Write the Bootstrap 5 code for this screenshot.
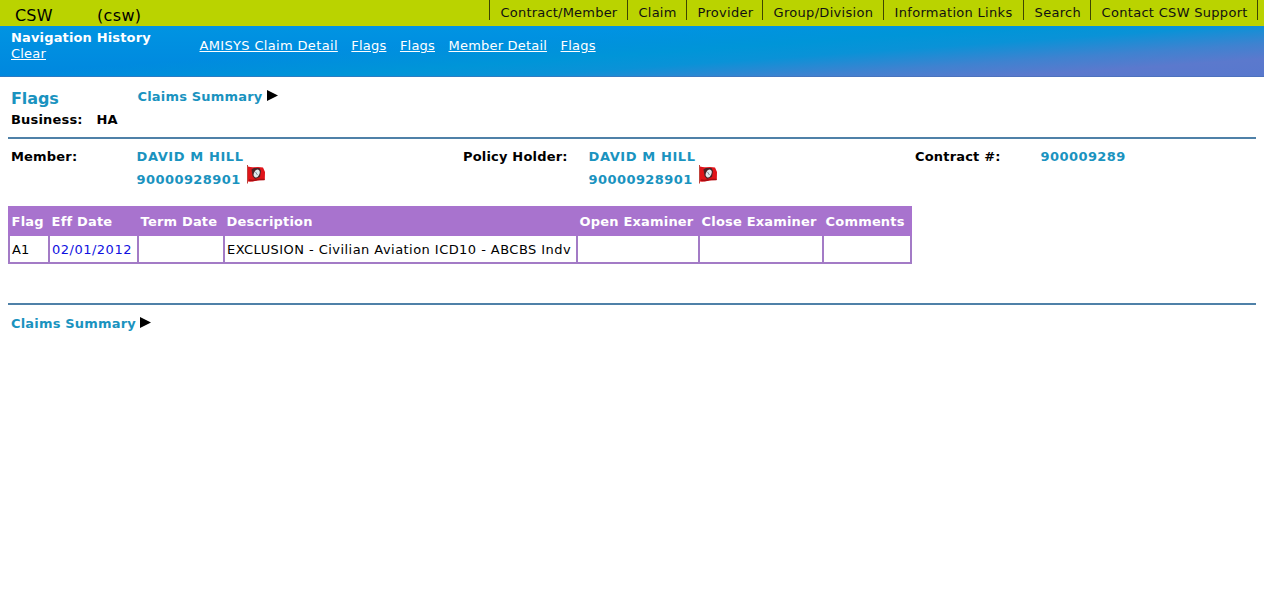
<!DOCTYPE html>
<html lang="en">
<head>
<meta charset="utf-8">
<meta name="viewport" content="width=device-width, initial-scale=1">
<title>CSW - Flags</title>
<link href="https://cdn.jsdelivr.net/npm/bootstrap@5.3.0/dist/css/bootstrap.min.css" rel="stylesheet">
<script src="https://cdn.jsdelivr.net/npm/bootstrap@5.3.0/dist/js/bootstrap.bundle.min.js"></script>
<style>
body{font-family:"DejaVu Sans",sans-serif;font-size:13px;line-height:16px;letter-spacing:.18px;color:#000;background:#fff}
a{text-decoration:none}
.topbar{height:26px;background:#bad300;border-bottom:1px solid #c4cf00}
.brand-text{font-size:16px;line-height:20px;padding:6px 0 0 15px}
.brand-text .app-name{width:82px;letter-spacing:.15px}
.brand-text .app-user{letter-spacing:.35px}
.top-menu{height:20px;border-left:1px solid #3d4500;margin-right:6px}
.top-menu a{height:20px;color:#111;border-right:1px solid #3d4500;padding:5px 0 0 10.6px;white-space:nowrap;letter-spacing:.3px}
.m1{width:138px}.m2{width:59px}.m3{width:76px}.m4{width:121px}.m5{width:140px}.m6{width:67px}.m7{width:167px}
.top-menu .m1,.top-menu .m2{letter-spacing:.2px}
.history{height:51px;background:linear-gradient(176deg,rgba(0,149,216,0) 34%,#0095d8 52%,#0a92d7 62%,#3f82d0 76%,#5b79cd 87%,#5878cd 100%),linear-gradient(#0094e2,#0087de);color:#fff;box-shadow:inset 0 -1px rgba(70,110,180,.6)}
.history a{color:#fff;text-decoration:underline;white-space:nowrap;letter-spacing:.2px}
.hist-title{width:199.5px;padding:4px 0 0 11px;letter-spacing:.15px}
.hist-links{padding-top:12px;gap:13.5px}
.hist-links a:first-child{letter-spacing:.34px}
.teal{color:#1a93bf;font-weight:700}
.page-head{padding:12px 0 0 11px;height:60px}
.page-title{font-size:16px;line-height:20px;width:126.5px;margin:0;letter-spacing:-.1px}
.business-line{padding-top:3px}
.business-label{width:85.5px}
.rule{height:2px;background:#4f81a8;margin:0 8px}
.rule-bottom{margin-top:39px}
.people{height:67px;padding:10px 0 0 11px}
.who{width:452px}
.who-label{width:125.5px;font-weight:700}
.digits{letter-spacing:.43px}
.who-name{letter-spacing:.6px}
.id-line{height:23px;padding-top:7px}
.warn-flag{width:20px;height:20px;margin:-8px 0 0 5px}
.tri{width:11px;height:12px;margin:1px 0 0 4.5px}
.flags-table{width:904px;margin-left:8px;table-layout:fixed;border-collapse:collapse}
.flags-table th,.flags-table td{border:2px solid #a37bc6;height:28px;white-space:nowrap;vertical-align:middle}
.flags-table th{background:#a873ce;border-color:#a873ce;color:#fff;padding:1px 0 0 1.6px;letter-spacing:.18px}
.flags-table td{padding:2px 0 0 2px}
.flags-table a{color:#1010e0;letter-spacing:.5px}
.flags-table .descr{letter-spacing:.45px}
.bottom-link{padding:11px 0 0 11px}
</style>
</head>
<body>
<svg class="d-none">
  <symbol id="flag" viewBox="0 0 20 20">
    <path d="M2 2.500Q5 3.500 8 3.200Q13 2.500 17 3.500L19 8L18.800 16Q13 16 9 17Q5 18 2 17.500Z" fill="#e0141a"/>
    <path d="M1.500 1V19.500" stroke="#c0443c" stroke-width="1"/>
    <path d="M3 16Q8 17 11 15.500L18.500 15.500" stroke="#a80d12" stroke-width="1.500" fill="none"/>
    <path d="M5.500 5.500L8 4L13.500 4L15 7L14 13L9 15L6.500 12Z" fill="#4a2226"/>
    <ellipse cx="10.700" cy="9.500" rx="2.700" ry="4" fill="#dfe8ee" transform="rotate(25 10.700 9.500)"/>
    <path d="M9.500 8L11.500 11" stroke="#718290" stroke-width=".9"/>
  </symbol>
  <symbol id="tri" viewBox="0 0 11 12"><path d="M0 0L11 5.500L0 11Z" fill="#000"/></symbol>
</svg>

<header class="topbar d-flex justify-content-between">
  <div class="brand-text d-flex"><span class="app-name">CSW</span><span class="app-user">(csw)</span></div>
  <nav class="top-menu d-flex">
    <a href="#" class="m1">Contract/Member</a><a href="#" class="m2">Claim</a><a href="#" class="m3">Provider</a><a href="#" class="m4">Group/Division</a><a href="#" class="m5">Information Links</a><a href="#" class="m6">Search</a><a href="#" class="m7">Contact CSW Support</a>
  </nav>
</header>

<section class="history d-flex">
  <div class="hist-title"><div class="fw-bold">Navigation History</div><a href="#" class="d-inline-block">Clear</a></div>
  <div class="hist-links d-flex"><a href="#">AMISYS Claim Detail</a><a href="#">Flags</a><a href="#">Flags</a><a href="#">Member Detail</a><a href="#">Flags</a></div>
</section>

<main>
  <section class="page-head">
    <div class="d-flex">
      <h1 class="page-title teal">Flags</h1>
      <a href="#" class="teal d-flex">Claims Summary<svg class="tri"><use href="#tri"/></svg></a>
    </div>
    <div class="business-line d-flex fw-bold"><span class="business-label">Business:</span><span>HA</span></div>
  </section>
  <div class="rule"></div>

  <section class="people d-flex">
    <div class="who d-flex">
      <div class="who-label">Member:</div>
      <div><a href="#" class="teal who-name d-block">DAVID M HILL</a>
        <div class="id-line d-flex"><a href="#" class="teal digits">90000928901</a><svg class="warn-flag"><use href="#flag"/></svg></div></div>
    </div>
    <div class="who d-flex">
      <div class="who-label">Policy Holder:</div>
      <div><a href="#" class="teal who-name d-block">DAVID M HILL</a>
        <div class="id-line d-flex"><a href="#" class="teal digits">90000928901</a><svg class="warn-flag"><use href="#flag"/></svg></div></div>
    </div>
    <div class="d-flex">
      <div class="who-label">Contract #:</div><a href="#" class="teal digits">900009289</a>
    </div>
  </section>

  <table class="flags-table">
    <colgroup><col style="width:40px"><col style="width:89px"><col style="width:86px"><col style="width:353px"><col style="width:122px"><col style="width:124px"><col style="width:88px"></colgroup>
    <thead><tr><th>Flag</th><th>Eff Date</th><th>Term Date</th><th>Description</th><th>Open Examiner</th><th>Close Examiner</th><th>Comments</th></tr></thead>
    <tbody><tr><td>A1</td><td><a href="#">02/01/2012</a></td><td></td><td class="descr">EXCLUSION - Civilian Aviation ICD10 - ABCBS Indv</td><td></td><td></td><td></td></tr></tbody>
  </table>

  <div class="rule rule-bottom"></div>
  <a href="#" class="bottom-link teal d-inline-flex">Claims Summary<svg class="tri"><use href="#tri"/></svg></a>
</main>
</body>
</html>
